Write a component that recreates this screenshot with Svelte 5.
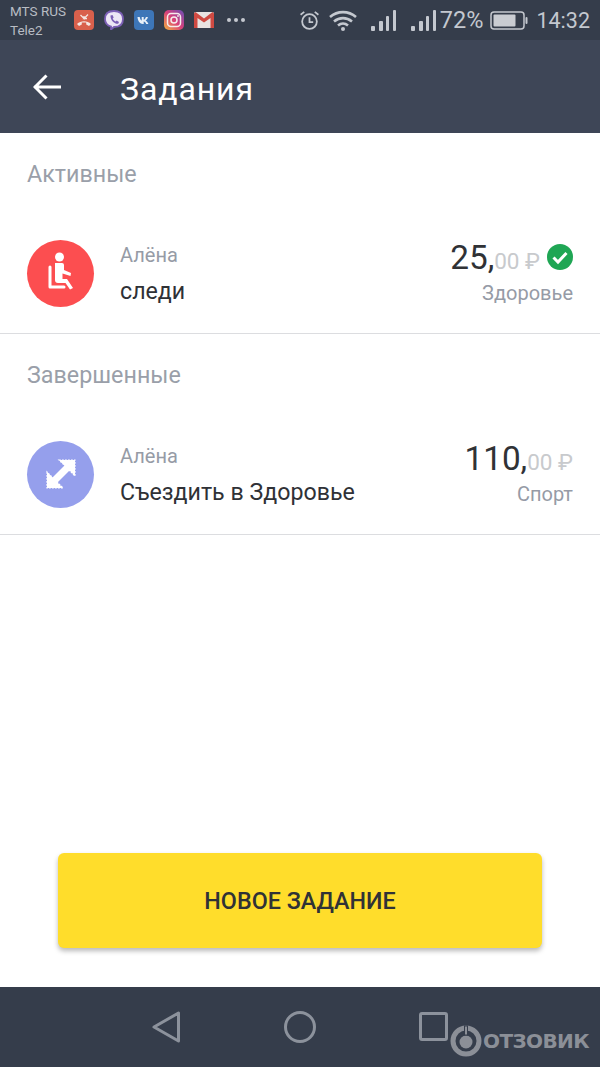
<script>
  const sections = [
    { title: 'Активные', name: 'Алёна', task: 'следи', whole: '25,', cents: '00 ₽', cat: 'Здоровье', kind: 'seat', done: true },
    { title: 'Завершенные', name: 'Алёна', task: 'Съездить в Здоровье', whole: '110,', cents: '00 ₽', cat: 'Спорт', kind: 'gym', done: false }
  ];
</script>

<div class="page">
  <div class="status">
    <div class="carriers"><span>MTS RUS</span><span>Tele2</span></div>
    <div class="notifs">
      <svg class="ni" viewBox="0 0 20 20"><rect width="20" height="20" rx="4" fill="#d9604c"/><path d="M3 14c3.800-3.800 10.200-3.800 14 0l-2 2-2.800-1.500v-2h-4.400v2L5 16z" fill="#f4e6e2"/><path d="M6.500 5l3.500 3.500V6M14 4.500L10 8.500H13" stroke="#f4e6e2" stroke-width="1.300" fill="none"/></svg>
      <svg class="ni" viewBox="0 0 20 20"><path d="M10 1c5 0 9 2 9 8s-4 8-9 8l-3 2.500V16.500C3 15.500 1 13 1 9c0-6 4-8 9-8z" fill="#ece6f5" stroke="#7b5fb5" stroke-width="1.800"/><path d="M6.500 5.500l2 -.5 1.200 2.500-1 1c.6 1.500 1.500 2.300 3 3l1-1 2.300 1.500-.8 1.800c-4 .5-8-4-7.700-8.300z" fill="#7b5fb5"/></svg>
      <svg class="ni" viewBox="0 0 20 20"><rect width="20" height="20" rx="4" fill="#3d76b8"/><path d="M3.500 7h2.200c.3 2 1.300 3.300 2 3.500V7h2v2.800c.8-.1 1.800-1.400 2.200-2.800h2c-.3 1.600-1.500 3-2.300 3.500.9.500 2.200 1.700 2.800 3.500h-2.200c-.4-1.200-1.500-2.300-2.500-2.400V14H9C5.800 14 3.800 11 3.500 7z" fill="#e8f0f8"/></svg>
      <svg class="ni" viewBox="0 0 20 20"><defs><linearGradient id="ig" x1="0" y1="1" x2="1" y2="0"><stop offset="0" stop-color="#f2b33d"/><stop offset=".5" stop-color="#d8407a"/><stop offset="1" stop-color="#6a4fb8"/></linearGradient></defs><rect width="20" height="20" rx="5" fill="url(#ig)"/><rect x="3.500" y="3.500" width="13" height="13" rx="3.500" fill="none" stroke="#f6ecec" stroke-width="1.500"/><circle cx="10" cy="10" r="3" fill="none" stroke="#f6ecec" stroke-width="1.500"/><circle cx="14" cy="6" r=".9" fill="#f6ecec"/></svg>
      <svg class="ni mail" viewBox="0 0 20 16"><rect width="20" height="16" rx="1.500" fill="#e9e4e2"/><path d="M0 1.500V16h3.500V6L10 10.500 16.500 6v10H20V1.500L18.500 0 10 6.500 1.500 0z" fill="#cf4a42"/></svg>
      <div class="dots"><i></i><i></i><i></i></div>
    </div>
    <div class="sys">
      <svg class="alarm" viewBox="0 0 20 20" fill="none" stroke="#c4c8cf" stroke-width="1.700"><circle cx="10" cy="11" r="7"/><path d="M10 7v4.500h3.500M1.500 4.500L5 1.800M18.500 4.500L15 1.800"/></svg>
      <svg class="wifi" viewBox="0 0 28 21" fill="none" stroke="#c4c8cf" stroke-width="2.600"><path d="M1 7c7.500-6.500 18.500-6.500 26 0M5 11.500c5.500-4.500 12.500-4.500 18 0M9 15.500c3-2.500 7-2.500 10 0"/><circle cx="14" cy="19" r="2" fill="#c4c8cf" stroke="none"/></svg>
      <svg class="bars b1" viewBox="0 0 25 21" fill="#c4c8cf"><rect x="0" y="16" width="4" height="5" rx="1"/><rect x="8" y="11" width="4" height="10" rx="1"/><rect x="15" y="6" width="3" height="15" rx="1"/><rect x="22" y="0" width="3" height="21" rx="1"/></svg>
      <svg class="bars b2" viewBox="0 0 25 21" fill="#c4c8cf"><rect x="0" y="16" width="4" height="5" rx="1"/><rect x="8" y="11" width="4" height="10" rx="1"/><rect x="15" y="6" width="3" height="15" rx="1"/><rect x="22" y="0" width="3" height="21" rx="1"/></svg>
      <span class="pct">72%</span>
      <svg class="batt" viewBox="0 0 38 19"><rect x="1" y="1" width="33" height="17" rx="3" fill="none" stroke="#c4c8cf" stroke-width="1.500"/><rect x="3.500" y="3.500" width="22" height="12" rx="1" fill="#c9ccd2"/><rect x="35.500" y="6" width="2" height="7" rx="1" fill="#c4c8cf"/></svg>
      <span class="time">14:32</span>
    </div>
  </div>

  <header class="head">
    <svg class="back" viewBox="0 0 28 26" fill="none" stroke="#fff" stroke-width="3"><path d="M1 13h27M13.500 1.500L2 13l11.500 11.500"/></svg>
    <h1>Задания</h1>
  </header>

  <main class="main">
    {#each sections as s}
      <section class="sec">
        <div class="label">{s.title}</div>
        <div class="row">
          <div class="avatar" class:red={s.kind === 'seat'} class:blue={s.kind === 'gym'}>
            {#if s.kind === 'seat'}
              <svg viewBox="0 0 30 44" width="30" height="44"><circle cx="13.500" cy="6" r="4.500" fill="#fff"/><path d="M4 16V36H18" fill="none" stroke="#fff" stroke-width="3" stroke-linecap="round" stroke-linejoin="round"/><path d="M9 12H16Q18 12 18 14V19L25 22L24.500 25L16.500 22.500V28H21L27 37L24 38.500L19.500 32H12Q9 32 9 29Z" fill="#fff"/></svg>
            {:else}
              <svg viewBox="0 0 32 32" width="32" height="32" fill="#fff" stroke="#fff"><path d="M8 24L24 8" stroke-width="7"/><path class="ragged" d="M14 2H30V18z"/><path class="ragged" d="M2 14V30H18z"/></svg>
            {/if}
          </div>
          <div class="info">
            <div class="name">{s.name}</div>
            <div class="task">{s.task}</div>
          </div>
          <div class="right">
            <div class="price">
              <span class="whole">{s.whole}</span><span class="cents">{s.cents}</span>
              {#if s.done}
                <svg class="check" viewBox="0 0 26 26"><circle cx="13" cy="13" r="13" fill="#1fa654"/><path d="M6.500 13.500l4.500 4.500 8.500-9" fill="none" stroke="#fff" stroke-width="3"/></svg>
              {/if}
            </div>
            <div class="cat">{s.cat}</div>
          </div>
        </div>
      </section>
    {/each}
    <div class="action"><button>НОВОЕ ЗАДАНИЕ</button></div>
  </main>

  <nav class="nav">
    <span class="cell"><svg width="30" height="34" viewBox="0 0 30 34" fill="none" stroke="#8c929c" stroke-width="3" stroke-linejoin="round"><path d="M26.500 3v28L2 17z"/></svg></span>
    <span class="cell"><svg width="32" height="32" viewBox="0 0 32 32" fill="none" stroke="#8c929c" stroke-width="3"><circle cx="16" cy="16" r="14.500"/></svg></span>
    <span class="cell"><span class="sq"></span></span>
  </nav>

  <div class="mark">
    <svg width="32" height="32" viewBox="0 0 32 32"><circle cx="16" cy="16" r="13" fill="none" stroke="#8b8f97" stroke-width="5"/><circle cx="16" cy="17" r="6.500" fill="#8b8f97"/><rect x="14.500" y="1" width="3" height="9" fill="#8b8f97" stroke="#353d4b"/></svg>
    <span>ОТЗОВИК</span>
  </div>
</div>

<style>
  :global(body) { margin: 0; background: #fff; }
  .page { position: relative; width: 600px; height: 1067px; display: flex; flex-direction: column; font-family: Roboto, "Noto Sans", sans-serif; overflow: hidden; }

  .status { height: 40px; flex: none; background: #353d4b; display: flex; align-items: center; color: #c4c8cf; }
  .carriers { width: 74px; padding: 2px 0 0 10px; box-sizing: border-box; display: flex; flex-direction: column; font-size: 13.500px; line-height: 19px; color: #b8bcc3; white-space: nowrap; }
  .notifs { display: flex; align-items: center; gap: 10px; }
  .ni { width: 20px; height: 20px; display: block; }
  .mail { height: 16px; }
  .dots { display: flex; gap: 3px; margin-left: 3px; }
  .dots i { width: 4px; height: 4px; border-radius: 50%; background: #c4c8cf; }
  .sys { margin-left: auto; display: flex; align-items: center; padding-right: 10px; }
  .alarm { width: 21px; height: 21px; margin-right: 9px; }
  .wifi { width: 28px; height: 21px; margin-right: 14px; }
  .bars { width: 25px; height: 21px; }
  .b1 { margin-right: 15px; }
  .b2 { margin-right: 4px; }
  .pct { font-size: 23.500px; margin-right: 7px; }
  .batt { width: 38px; height: 19px; margin-right: 8px; }
  .time { font-size: 21.500px; }

  .head { height: 93px; flex: none; background: #3e4657; display: flex; align-items: center; padding-left: 33px; box-sizing: border-box; }
  .back { width: 28px; height: 26px; margin-right: 59px; }
  h1 { margin: 4px 0 0; font-size: 32px; font-weight: 400; color: #fff; letter-spacing: .9px; }

  .main { flex: 1; display: flex; flex-direction: column; min-height: 0; }
  .sec { height: 201px; box-sizing: border-box; border-bottom: 1px solid #dcdde0; display: flex; flex-direction: column; }
  .label { font-size: 23.300px; line-height: 26px; color: #9a9fa9; padding: 28px 0 0 27px; height: 74px; box-sizing: border-box; }
  .row { flex: 1; display: flex; align-items: center; padding: 6px 27px 0; }
  .avatar { width: 67px; height: 67px; border-radius: 50%; display: flex; align-items: center; justify-content: center; flex: none; margin-right: 26px; }
  .red { background: #fc4e50; }
  .blue { background: #959fec; }
  .ragged { stroke-width: 1.200; stroke-dasharray: 1.800 1.200; }
  .info { flex: 1; display: flex; flex-direction: column; gap: 11px; }
  .name { font-size: 20px; line-height: 24px; color: #969ba6; }
  .task { font-size: 23.200px; line-height: 26px; color: #2f3136; }
  .right { display: flex; flex-direction: column; align-items: flex-end; padding-bottom: 7px; }
  .price { display: flex; align-items: baseline; color: #303236; height: 46px; line-height: 46px; }
  .whole { font-size: 33.300px; }
  .cents { font-size: 22.500px; color: #c8cacd; }
  .check { width: 26px; height: 26px; margin-left: 7px; align-self: flex-start; margin-top: 9px; }
  .cat { font-size: 20px; line-height: 24px; color: #969ba6; }

  .action { margin-top: auto; padding: 0 58px 39px; }
  button { width: 100%; height: 95px; border: 0; border-radius: 6px; background: #ffdd2b; color: #303236; font: 500 23.300px Roboto, sans-serif; box-shadow: 0 3px 5px rgba(0,0,0,.28); padding: 0; }

  .nav { height: 80px; flex: none; background: #353d4b; display: flex; justify-content: center; align-items: flex-start; padding-top: 23px; box-sizing: border-box; }
  .cell { width: 133px; height: 34px; display: flex; align-items: center; justify-content: center; }
  .sq { width: 23px; height: 23px; border: 3px solid #8c929c; border-radius: 3px; display: block; margin-top: -2px; }

  .mark { position: absolute; left: 450px; top: 1025px; display: flex; align-items: center; gap: 1px; color: #8b8f97; }
  .mark span { font: 700 20px "DejaVu Sans", sans-serif; letter-spacing: -.6px; }
</style>
